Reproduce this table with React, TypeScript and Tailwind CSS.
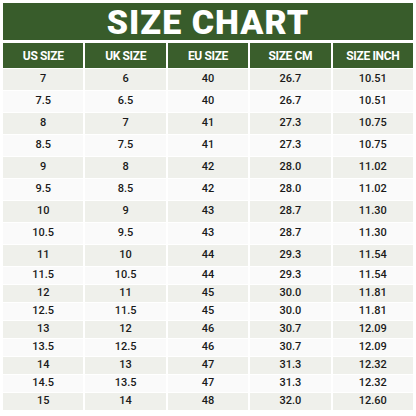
import React from "react";

const rows: string[][] = [
  ["7", "6", "40", "26.7", "10.51"],
  ["7.5", "6.5", "40", "26.7", "10.51"],
  ["8", "7", "41", "27.3", "10.75"],
  ["8.5", "7.5", "41", "27.3", "10.75"],
  ["9", "8", "42", "28.0", "11.02"],
  ["9.5", "8.5", "42", "28.0", "11.02"],
  ["10", "9", "43", "28.7", "11.30"],
  ["10.5", "9.5", "43", "28.7", "11.30"],
  ["11", "10", "44", "29.3", "11.54"],
  ["11.5", "10.5", "44", "29.3", "11.54"],
  ["12", "11", "45", "30.0", "11.81"],
  ["12.5", "11.5", "45", "30.0", "11.81"],
  ["13", "12", "46", "30.7", "12.09"],
  ["13.5", "12.5", "46", "30.7", "12.09"],
  ["14", "13", "47", "31.3", "12.32"],
  ["14.5", "13.5", "47", "31.3", "12.32"],
  ["15", "14", "48", "32.0", "12.60"],
];

const headers = ["US SIZE", "UK SIZE", "EU SIZE", "SIZE CM", "SIZE INCH"];

export default function App() {
  return (
    <div className="w-[416px] h-[416px] bg-white pt-[3px] px-[3px] font-['Roboto',sans-serif]">
      <div className="h-[37px] bg-[#385c2b] flex items-center justify-center">
        <h1 className="text-[34px] font-black text-white tracking-[0.03em] leading-none pt-[1px]">SIZE CHART</h1>
      </div>

      <div className="mt-[3px] grid grid-cols-5 gap-x-[2px]">
        {headers.map((h) => (
          <div key={h} className="h-[25px] bg-[#3a5e2c] flex items-center justify-center text-white text-[12px] font-bold tracking-[-0.03em]">
            {h}
          </div>
        ))}
      </div>

      <div className="mt-px flex flex-col gap-y-px">
        {rows.map((r, i) => (
          <div key={i} className="grid grid-cols-5 gap-x-[2px]">
            {r.map((c, j) => (
              <div
                key={j}
                className={`${i < 9 ? "h-[21px]" : "h-[17px]"} ${i % 2 === 0 ? "bg-[#eff0eb]" : "bg-[#fafafa]"} flex items-center justify-center text-[11px] text-[#1a1a1a] font-medium`}
              >
                {c}
              </div>
            ))}
          </div>
        ))}
      </div>
    </div>
  );
}
